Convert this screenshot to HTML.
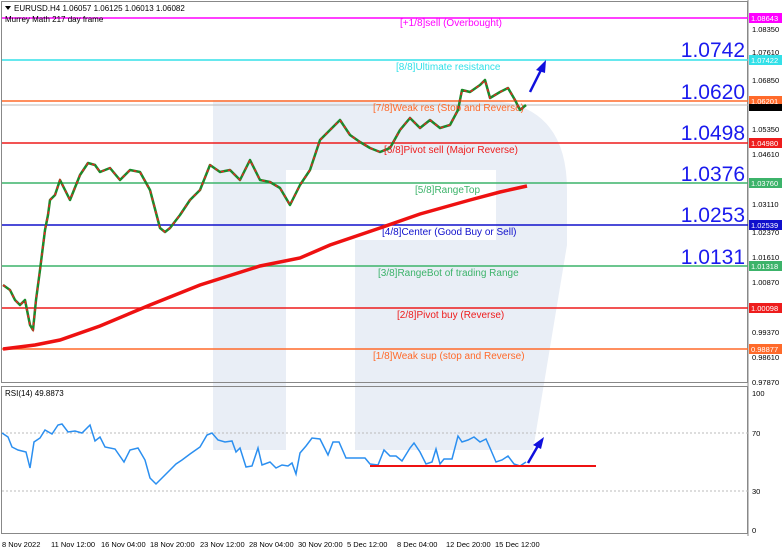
<!DOCTYPE html>
<html><head><meta charset="utf-8"><style>
body{margin:0;width:782px;height:551px;overflow:hidden;background:#fff;font-family:"Liberation Sans",sans-serif}
svg{display:block}
text{font-family:"Liberation Sans",sans-serif}
</style></head><body>
<svg width="782" height="551" viewBox="0 0 782 551" xmlns="http://www.w3.org/2000/svg">
<rect width="782" height="551" fill="#fff"/>
<!-- watermark -->
<path fill="#e9eef6" d="M213,100 H480 Q567,100 567,190 V245 L533,450 H355 V240 H496 V170 H286 V450 H213 Z"/>
<!-- frame -->
<rect x="1.5" y="1.5" width="746" height="381" fill="none" stroke="#888" />
<rect x="1.5" y="386.5" width="746" height="147" fill="none" stroke="#888"/>
<line x1="748" y1="0" x2="748" y2="536" stroke="#888"/>
<!-- levels -->
<g stroke-width="1.6">
<line x1="2" y1="18" x2="748" y2="18" stroke="#ff00ff"/>
<line x1="2" y1="60" x2="748" y2="60" stroke="#33e0e8"/>
<line x1="2" y1="101" x2="748" y2="101" stroke="#ff6a2a"/>
<line x1="2" y1="143" x2="748" y2="143" stroke="#ee1c1c"/>
<line x1="2" y1="183" x2="748" y2="183" stroke="#3cb36a"/>
<line x1="2" y1="225" x2="748" y2="225" stroke="#1010cc"/>
<line x1="2" y1="266" x2="748" y2="266" stroke="#3cb36a"/>
<line x1="2" y1="308" x2="748" y2="308" stroke="#ee1c1c"/>
<line x1="2" y1="349" x2="748" y2="349" stroke="#ff6a2a"/>
</g>
<line x1="2" y1="105" x2="748" y2="105" stroke="#bbb" stroke-width="1"/>
<!-- level labels -->
<g font-size="10">
<text x="400" y="26" fill="#ff00ff">[+1/8]sell (Overbought)</text>
<text x="396" y="70" fill="#33e0e8">[8/8]Ultimate resistance</text>
<text x="373" y="111" fill="#ff6a2a">[7/8]Weak res (Stop and Reverse)</text>
<text x="384" y="153" fill="#ee1c1c">[6/8]Pivot sell (Major Reverse)</text>
<text x="415" y="193" fill="#3cb36a">[5/8]RangeTop</text>
<text x="382" y="235" fill="#1010cc">[4/8]Center (Good Buy or Sell)</text>
<text x="378" y="276" fill="#3cb36a">[3/8]RangeBot of trading Range</text>
<text x="397" y="318" fill="#ee1c1c">[2/8]Pivot buy (Reverse)</text>
<text x="373" y="359" fill="#ff6a2a">[1/8]Weak sup (stop and Reverse)</text>
</g>
<g font-size="21" fill="#1a1aee" text-anchor="end">
<text x="745" y="57">1.0742</text>
<text x="745" y="99">1.0620</text>
<text x="745" y="140">1.0498</text>
<text x="745" y="181">1.0376</text>
<text x="745" y="222">1.0253</text>
<text x="745" y="264">1.0131</text>
</g>
<!-- MA -->
<polyline fill="none" stroke="#ee1111" stroke-width="3.5" points="3,349 35,345 60,340 100,326 150,305 200,285 260,266 300,258 330,245 380,228 420,214 470,200 500,192 527,186"/>
<!-- price -->
<polyline fill="none" stroke="#1a8a2a" stroke-width="2.5" stroke-linejoin="round" points="3,285 10,290 15,300 20,305 25,300 30,325 33,330 36,300 40,270 45,230 48,215 50,200 55,195 60,180 70,200 80,175 88,163 95,165 100,172 110,168 120,180 130,170 140,172 150,190 160,228 165,232 170,228 180,215 190,200 200,190 210,165 220,172 230,170 240,180 250,160 260,180 270,182 280,188 290,205 300,185 310,170 320,140 330,130 340,120 350,135 360,142 370,148 380,152 390,148 400,130 410,118 420,128 430,120 440,128 450,125 458,110 462,90 470,92 480,85 485,80 490,98 500,92 508,88 515,100 520,110 526,105"/>
<polyline fill="none" stroke="#e82222" stroke-width="1.5" stroke-dasharray="3,4" points="3,285 10,290 15,300 20,305 25,300 30,325 33,330 36,300 40,270 45,230 48,215 50,200 55,195 60,180 70,200 80,175 88,163 95,165 100,172 110,168 120,180 130,170 140,172 150,190 160,228 165,232 170,228 180,215 190,200 200,190 210,165 220,172 230,170 240,180 250,160 260,180 270,182 280,188 290,205 300,185 310,170 320,140 330,130 340,120 350,135 360,142 370,148 380,152 390,148 400,130 410,118 420,128 430,120 440,128 450,125 458,110 462,90 470,92 480,85 485,80 490,98 500,92 508,88 515,100 520,110 526,105"/>
<!-- arrow main -->
<line x1="530" y1="92" x2="542" y2="68" stroke="#1010dd" stroke-width="2.5"/>
<polygon points="546,60 536,70 545,73" fill="#1010dd"/>
<!-- header -->
<polygon points="5,6 11,6 8,10" fill="#000"/>
<text x="14" y="11" font-size="8" fill="#000">EURUSD.H4  1.06057 1.06125 1.06013 1.06082</text>
<text x="5" y="22" font-size="8" fill="#000">Murrey Math 217 day frame</text>
<!-- price axis -->
<g font-size="7.5" fill="#000">
<text x="752" y="32">1.08350</text>
<text x="752" y="55">1.07610</text>
<text x="752" y="83">1.06850</text>
<text x="752" y="132">1.05350</text>
<text x="752" y="157">1.04610</text>
<text x="752" y="207">1.03110</text>
<text x="752" y="235">1.02370</text>
<text x="752" y="260">1.01610</text>
<text x="752" y="285">1.00870</text>
<text x="752" y="335">0.99370</text>
<text x="752" y="360">0.98610</text>
<text x="752" y="385">0.97870</text>
<text x="752" y="396">100</text>
<text x="752" y="436">70</text>
<text x="752" y="494">30</text>
<text x="752" y="533">0</text>
</g>
<g font-size="7.5" fill="#fff">
<rect x="749" y="13" width="33" height="10" fill="#ff00ff"/><text x="751" y="21">1.08643</text>
<rect x="749" y="55" width="33" height="10" fill="#33e0e8"/><text x="751" y="63">1.07422</text>
<rect x="749" y="96" width="33" height="10" fill="#ff6a2a"/><text x="751" y="104">1.06201</text>
<rect x="749" y="104" width="33" height="7" fill="#000"/>
<rect x="749" y="138" width="33" height="10" fill="#ee1c1c"/><text x="751" y="146">1.04980</text>
<rect x="749" y="178" width="33" height="10" fill="#3cb36a"/><text x="751" y="186">1.03760</text>
<rect x="749" y="220" width="33" height="10" fill="#1010cc"/><text x="751" y="228">1.02539</text>
<rect x="749" y="261" width="33" height="10" fill="#3cb36a"/><text x="751" y="269">1.01318</text>
<rect x="749" y="303" width="33" height="10" fill="#ee1c1c"/><text x="751" y="311">1.00098</text>
<rect x="749" y="344" width="33" height="10" fill="#ff6a2a"/><text x="751" y="352">0.98877</text>
</g>
<!-- RSI -->
<text x="5" y="396" font-size="8">RSI(14) 49.8873</text>
<line x1="2" y1="433" x2="748" y2="433" stroke="#bbb" stroke-dasharray="2,2"/>
<line x1="2" y1="491" x2="748" y2="491" stroke="#bbb" stroke-dasharray="2,2"/>
<polyline fill="none" stroke="#2b8ff0" stroke-width="1.5" points="2,433 8,437 12,447 18,450 26,452 30,468 34,442 40,438 45,430 52,434 58,425 62,424 68,432 75,431 82,433 90,425 95,441 100,437 105,447 115,449 124,462 130,450 138,448 145,460 150,478 156,484 163,477 170,470 176,464 182,460 190,454 200,447 207,435 212,433 218,440 225,442 232,441 236,452 240,448 246,467 252,466 258,448 262,465 270,462 276,468 282,465 288,466 292,463 296,474 300,453 306,446 312,438 320,439 328,455 333,442 339,442 346,458 352,458 360,458 365,458 370,464 378,465 384,450 390,456 396,456 402,461 410,448 414,443 420,452 426,464 432,462 436,449 440,464 444,459 452,459 458,436 462,442 468,440 474,437 480,442 486,439 490,448 496,462 502,460 508,456 514,464 520,466 526,462"/>
<line x1="370" y1="466" x2="596" y2="466" stroke="#ee1111" stroke-width="2"/>
<line x1="528" y1="463" x2="539" y2="444" stroke="#1010dd" stroke-width="2.5"/>
<polygon points="544,437 533,445 541,449" fill="#1010dd"/>
<!-- time axis -->
<g font-size="7.5" fill="#000">
<text x="2" y="547">8 Nov 2022</text>
<text x="51" y="547">11 Nov 12:00</text>
<text x="101" y="547">16 Nov 04:00</text>
<text x="150" y="547">18 Nov 20:00</text>
<text x="200" y="547">23 Nov 12:00</text>
<text x="249" y="547">28 Nov 04:00</text>
<text x="298" y="547">30 Nov 20:00</text>
<text x="347" y="547">5 Dec 12:00</text>
<text x="397" y="547">8 Dec 04:00</text>
<text x="446" y="547">12 Dec 20:00</text>
<text x="495" y="547">15 Dec 12:00</text>
</g>
</svg>
</body></html>
